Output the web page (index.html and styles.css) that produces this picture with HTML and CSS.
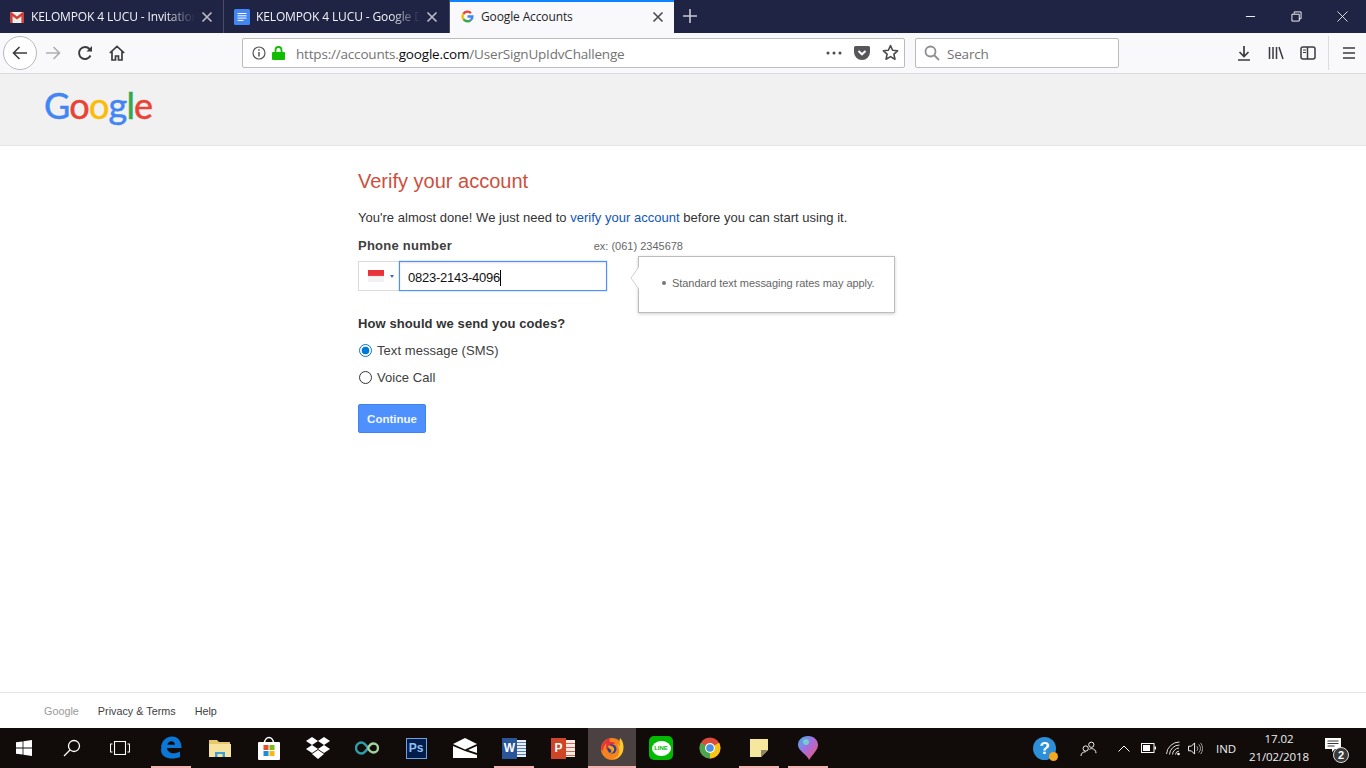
FILE: index.html
```html
<!DOCTYPE html>
<html lang="en">
<head>
<meta charset="utf-8">
<title>Google Accounts</title>
<link rel="stylesheet" href="styles.css">
</head>
<body>
<div class="tabstrip">
  <div class="tab">
    <svg class="favicon" viewBox="0 0 16 16"><rect x="1" y="3" width="14" height="11" fill="#eee"/><path d="M1 3v11h2.6V7.2L8 10.6l4.4-3.4V14H15V3h-1.4L8 7.6 2.4 3z" fill="#d0413a"/></svg>
    <span class="tab-label">KELOMPOK 4 LUCU - Invitation</span>
    <svg class="tab-close" viewBox="0 0 12 12"><path d="M1.5 1.5l9 9M10.5 1.5l-9 9" stroke="#b9bac6" stroke-width="1.7"/></svg>
  </div>
  <div class="tab tab-second">
    <svg class="favicon" viewBox="0 0 16 16"><rect width="16" height="16" rx="1.5" fill="#4285f4"/><path d="M3.5 4.5h9M3.5 6.8h9M3.5 9.1h9M3.5 11.4h6" stroke="#fff" stroke-width="1"/></svg>
    <span class="tab-label">KELOMPOK 4 LUCU - Google D</span>
    <svg class="tab-close" viewBox="0 0 12 12"><path d="M1.5 1.5l9 9M10.5 1.5l-9 9" stroke="#b9bac6" stroke-width="1.7"/></svg>
  </div>
  <div class="tab tab-active">
    <svg class="favicon favicon-g" viewBox="0 0 16 16" fill="none" stroke-width="3"><path d="M8 8h6a6 6 0 0 1-2 4.4" stroke="#4285f4"/><path d="M12 12.4A6 6 0 0 1 3 11.3" stroke="#34a853"/><path d="M3 11.3a6 6 0 0 1 0-6.6" stroke="#fbbc05"/><path d="M3 4.700A6 6 0 0 1 12.200 3.700" stroke="#ea4335"/></svg>
    <span class="tab-label">Google Accounts</span>
    <svg class="tab-close" viewBox="0 0 12 12"><path d="M1.500 1.500l9 9M10.500 1.500l-9 9" stroke="#4a4a4f" stroke-width="1.600"/></svg>
  </div>
  <svg class="new-tab" viewBox="0 0 14 14"><path d="M7 0v14M0 7h14" stroke="#c9cad4" stroke-width="1.600"/></svg>
  <div class="window-controls">
    <svg viewBox="0 0 12 12"><path d="M1 6h10" stroke="#fff"/></svg>
    <svg viewBox="0 0 12 12" fill="none"><path d="M3.500 3V1h7.500v7.500H9M1 3.500h8V11H1z" stroke="#fff"/></svg>
    <svg viewBox="0 0 12 12"><path d="M.5.500l11 11M11.500.500l-11 11" stroke="#fff" stroke-width=".9"/></svg>
  </div>
</div>

<div class="toolbar">
  <div class="back-circle">
    <svg class="icon" viewBox="0 0 16 16" fill="none" stroke="#3b3b40" stroke-width="1.600"><path d="M15 8H1.500M7.500 2L1.500 8l6 6"/></svg>
  </div>
  <svg class="icon forward" viewBox="0 0 16 16" fill="none" stroke="#aeaeb2" stroke-width="1.600"><path d="M1 8h13.500M8.500 2l6 6-6 6"/></svg>
  <svg class="icon reload" viewBox="0 0 16 16" fill="none" stroke="#3b3b40" stroke-width="1.900"><path d="M13.500 10.500A6 6 0 1 1 12.500 4L14 5.500"/><path d="M15 1v5.500H9.500z" fill="#3b3b40" stroke="none"/></svg>
  <svg class="icon home" viewBox="0 0 16 16" fill="none" stroke="#3b3b40" stroke-width="1.700"><path d="M.8 8L8 1.300 15.200 8M3 6.500V15h3.500v-4h3v4H13V6.500"/></svg>
  <div class="urlbar">
    <svg class="info" viewBox="0 0 14 14" fill="none"><circle cx="7" cy="7" r="6" stroke="#55555a" stroke-width="1.200"/><path d="M7 6v4.500M7 3.300v1.500" stroke="#55555a" stroke-width="1.500"/></svg>
    <svg class="lock" viewBox="0 0 13 14"><path d="M3.500 6.500V4a3 3 0 0 1 6 0v2.500" fill="none" stroke="#12bc00" stroke-width="1.800"/><rect y="6" width="13" height="8" rx="1" fill="#12bc00"/></svg>
    <span class="url"><span class="url-dim">https://accounts.</span>google.com<span class="url-dim">/UserSignUpIdvChallenge</span></span>
    <span class="url-actions">
      <svg class="dots" viewBox="0 0 16 4"><circle cx="2" cy="2" r="1.500" fill="#4a4a4f"/><circle cx="8" cy="2" r="1.500" fill="#4a4a4f"/><circle cx="14" cy="2" r="1.500" fill="#4a4a4f"/></svg>
      <svg class="pocket" viewBox="0 0 16 14"><path d="M1.500 0h13A1.500 1.500 0 0 1 16 1.500V6A8 8 0 0 1 0 6V1.500A1.500 1.500 0 0 1 1.500 0z" fill="#55555a"/><path d="M4.500 5L8 8.300 11.500 5" fill="none" stroke="#fff" stroke-width="2"/></svg>
      <svg class="star" viewBox="0 0 16 16"><path d="M8 1.500l2 4.400 4.700.5-3.500 3.200 1 4.700L8 11.900l-4.200 2.400 1-4.700L1.300 6.400 6 5.900z" fill="none" stroke="#4a4a4f" stroke-width="1.500" stroke-linejoin="round"/></svg>
    </span>
  </div>
  <div class="searchbar">
    <svg class="search-glass" viewBox="0 0 16 16" fill="none" stroke="#8e8e92" stroke-width="1.800"><circle cx="6.500" cy="6.500" r="5"/><path d="M10 10l5 5"/></svg>
    <span class="search-text">Search</span>
  </div>
  <div class="toolbar-right">
    <svg class="icon" viewBox="0 0 16 16" fill="none" stroke="#3b3b40" stroke-width="1.700"><path d="M8 1v10M3.500 7L8 11.500 12.500 7M2 15h12"/></svg>
    <svg class="icon" viewBox="0 0 16 16" fill="none" stroke="#3b3b40" stroke-width="1.500"><path d="M1.500 2v12M5 2v12M8.500 2v12M11 2l4 12"/></svg>
    <svg class="icon" viewBox="0 0 16 16" fill="none" stroke="#3b3b40" stroke-width="1.500"><rect x="1" y="2" width="14" height="12" rx="2"/><path d="M7.500 2v12"/><path d="M3 5h3M3 7.500h3" stroke-width="1"/></svg>
    <span class="toolbar-sep"></span>
    <svg class="icon" viewBox="0 0 16 16" fill="none" stroke="#3b3b40" stroke-width="1.700"><path d="M2 3h12M2 8h12M2 13h12"/></svg>
  </div>
</div>

<header class="page-header">
  <div class="logo"><span class="c-blue">G</span><span class="c-red">o</span><span class="c-yellow">o</span><span class="c-blue">g</span><span class="c-green">l</span><span class="c-red">e</span></div>
</header>

<main class="content">
  <h1>Verify your account</h1>
  <p class="lead">You're almost done! We just need to <a href="#">verify your account</a> before you can start using it.</p>
  <div class="label-row"><label>Phone number</label><span class="example">ex: (061) 2345678</span></div>
  <div class="phone-row">
    <div class="flag-box">
      <span class="flag"></span><span class="flag-caret"></span>
    </div>
    <div class="phone-input"><span class="phone-value">0823-2143-4096</span></div>
    <div class="tooltip">
      <svg class="tooltip-arrow" viewBox="0 0 10 26"><path d="M9.500 1L1 13l8.500 12" fill="#fff" stroke="#d0d0d0"/><path d="M10 1v24" stroke="#fff" stroke-width="2"/></svg>
      <ul><li>Standard text messaging rates may apply.</li></ul>
    </div>
  </div>
  <div class="question">How should we send you codes?</div>
  <label class="radio-row first-radio"><input type="radio" name="m" checked><span>Text message (SMS)</span></label>
  <label class="radio-row"><input type="radio" name="m"><span>Voice Call</span></label>
  <button class="continue" type="button">Continue</button>
</main>

<footer class="page-footer">
  <span class="foot-brand">Google</span>
  <a href="#">Privacy &amp; Terms</a>
  <a href="#">Help</a>
</footer>

<div class="taskbar">
  <div class="sys-btn"><svg viewBox="0 0 16 16" width="16" height="16"><path d="M0 2.300l6.600-.9v6.200H0zM7.400 1.300L16 0v7.600H7.400zM0 8.400h6.600v6.200L0 13.700zM7.400 8.400H16V16l-8.600-1.200z" fill="#fff"/></svg></div>
  <div class="sys-btn"><svg viewBox="0 0 18 18" width="18" height="18" fill="none" stroke="#fff" stroke-width="1.300"><circle cx="11" cy="7" r="5.500"/><path d="M7 11l-6 6"/></svg></div>
  <div class="sys-btn taskview"><svg viewBox="0 0 20 14" width="20" height="14" fill="none" stroke="#fff" stroke-width="1.100"><rect x="4.500" y=".5" width="11" height="13"/><path d="M2.500 3H.5v8h2M17.500 3h2v8h-2"/></svg></div>

  <div class="app open"><svg viewBox="0 0 22 24" width="22" height="24"><path d="M1 11C2 4 7 .5 12 .5c6 0 9.500 4.500 9.500 11.500H7c.3 5 7 7 13 3.500v5.500C13 24 1 23 1 14c0-3 1.500-5.500 4-7.500C4 8 3.500 9.500 3 11zM7.300 8.800H15C15 4 8 4 7.300 8.800z" fill="#0b78d7"/></svg></div>
  <div class="app"><svg viewBox="0 0 22 18" width="22" height="18"><path d="M0 1h8l2 2h11v15H0z" fill="#e8c66a"/><path d="M0 5h22v13H0z" fill="#f7e3a0"/><path d="M6 13h10v5h-2.500v-3h-5v3H6z" fill="#3fa0d8"/></svg></div>
  <div class="app"><svg viewBox="0 0 24 24" width="24" height="24"><path d="M7.500 7a4.500 5.500 0 0 1 9 0" fill="none" stroke="#fff" stroke-width="1.500"/><rect x="1" y="6" width="22" height="18" rx="1" fill="#fff"/><rect x="6.500" y="9" width="5" height="5" fill="#e8502a"/><rect x="12.500" y="9" width="5" height="5" fill="#7db81c"/><rect x="6.500" y="15" width="5" height="5" fill="#1c8fdc"/><rect x="12.500" y="15" width="5" height="5" fill="#fbb612"/></svg></div>
  <div class="app"><svg viewBox="0 0 24 22" width="24" height="22" fill="#fff"><path d="M6 0l6 4-6 4-6-4zM18 0l6 4-6 4-6-4zM0 12l6-4 6 4-6 4zM24 12l-6-4-6 4 6 4zM6 17l6-4 6 4-6 5z"/></svg></div>
  <div class="app"><svg viewBox="0 0 24 14" width="24" height="14" fill="none" stroke-width="2.400"><path d="M13 7c-2-3-4-5.500-6.500-5.500a5.500 5.500 0 0 0 0 11C9 12.500 11 10 13 7" stroke="#2f9fa8"/><path d="M13 7c1.500-3 3-4.500 5.500-4.500a4.500 4.500 0 0 1 0 9C16 11.500 14.500 10 13 7" stroke="#a3d39c"/></svg></div>
  <div class="app"><div class="ps-tile">Ps</div></div>
  <div class="app"><svg viewBox="0 0 24 20" width="24" height="20"><path d="M0 6l12-6 12 6-12 5.500z" fill="#fff"/><path d="M0 8v12h24v-3L12 13zM24 8l-9 4 9 3z" fill="#fff"/></svg></div>
  <div class="app open"><div class="office word"><span class="office-letter">W</span><span class="office-page word-page"></span></div></div>
  <div class="app"><div class="office ppt"><span class="office-letter">P</span><span class="office-page ppt-page"></span></div></div>
  <div class="app active open"><svg viewBox="0 0 24 24" width="24" height="24"><circle cx="12" cy="13" r="11" fill="#f4831f"/><path d="M20 2c4 4 4 10 3 13-2 6-7 8-11 8 6-1 8-6 7-10-.5-3-1.500-4-2-5 1 .5 2 1 3 3 0-4-1-6.500 0-9z" fill="#ffc72c"/><path d="M1 13C2 7 6 3 10 2c-.5 1.500-.5 3 0 4 2 0 4 0 5 1-1 1-2.500 1.500-3 2 1 1.500 3 3 1.500 5-1.500 1.500-5 1.500-7-1-1-1.500 0-4 0-6C4.500 9 3 11 3 15z" fill="#e6303c"/><circle cx="12" cy="13" r="4.500" fill="#2f3e8f"/><path d="M8 10c2-1 5 0 6 2 1 3-2 6-5 5 3 0 3-3 1-4-1-.5-2-1-2-3z" fill="#f7a01d"/></svg></div>
  <div class="app"><div class="line-tile"><span class="line-bubble">LINE</span></div></div>
  <div class="app"><svg viewBox="0 0 22 22" width="22" height="22"><circle cx="11" cy="11" r="10.500" fill="#dd4b3a"/><path d="M11 11L20.100 5.800A10.500 10.500 0 0 1 11 21.500z" fill="#f5c518"/><path d="M11 11L11 21.500A10.500 10.500 0 0 1 1.900 5.800z" fill="#4aa54c"/><circle cx="11" cy="11" r="5" fill="#fff"/><circle cx="11" cy="11" r="3.800" fill="#4a8fe0"/></svg></div>
  <div class="app open"><svg viewBox="0 0 18 18" width="18" height="18"><path d="M0 0h18v11l-7 7H0z" fill="#f5e79e"/><path d="M18 11h-7v7z" fill="#8b8666"/></svg></div>
  <div class="app open"><svg viewBox="0 0 20 24" width="20" height="24"><defs><linearGradient id="mapg" x1="0" y1="0" x2="1" y2="1"><stop offset="0" stop-color="#39b6e8"/><stop offset=".45" stop-color="#a66de0"/><stop offset="1" stop-color="#f0566a"/></linearGradient></defs><path d="M10 0c6 0 10 4 10 9 0 5-6 10-9 15-1-5-11-9-11-15C0 4 4 0 10 0z" fill="url(#mapg)"/><circle cx="8" cy="6" r="3" fill="#6fe0c8" opacity=".8"/></svg></div>

  <div class="tray">
    <div class="help-badge"><span class="help-q">?</span><span class="help-dot"></span></div>
    <svg class="tray-people" viewBox="0 0 18 16" fill="none" stroke="#fff" stroke-width="1"><circle cx="6" cy="8" r="2.800"/><path d="M1 16c0-3 2-4.500 5-4.500"/><circle cx="12" cy="4" r="2.800"/><path d="M10 9c1-1 2-1 3-.8 2 .3 4 1.800 4 4.800"/></svg>
    <svg class="tray-chevron" viewBox="0 0 12 7" fill="none" stroke="#fff" stroke-width="1"><path d="M.5 6.500L6 1l5.500 5.500"/></svg>
    <svg class="tray-battery" viewBox="0 0 15 10"><rect x=".5" y=".5" width="12.500" height="9" fill="none" stroke="#fff"/><rect x="2" y="2" width="7" height="6" fill="#fff"/><rect x="13.500" y="3.500" width="1.500" height="3" fill="#fff"/></svg>
    <svg class="tray-wifi" viewBox="0 0 15 15" fill="none" stroke="#ddd" stroke-width="1"><path d="M.5 13A13 13 0 0 1 13.500 1M3.500 13.500A10 10 0 0 1 13.500 4M6.500 13.500A7 7 0 0 1 13 7M9.500 13.500A4 4 0 0 1 13 10"/><circle cx="12.500" cy="13" r="1.300" fill="#fff" stroke="none"/></svg>
    <svg class="tray-volume" viewBox="0 0 16 14" fill="none" stroke="#fff" stroke-width="1"><path d="M.5 4.500h3L7 1v12L3.500 9.500h-3z"/><path d="M9.500 4.500a4 4 0 0 1 0 5M11.500 2.500a7 7 0 0 1 0 9M13.500 1a9.500 9.500 0 0 1 0 12" stroke="#aaa"/></svg>
    <span class="tray-lang">IND</span>
    <div class="clock"><span>17.02</span><span>21/02/2018</span></div>
    <div class="notif">
      <svg viewBox="0 0 16 14" width="16" height="14"><path d="M0 0h16v11h-6l-3 3v-3H0z" fill="#fff"/><path d="M2.500 3h11M2.500 5.500h11M2.500 8h7" stroke="#222" stroke-width=".9"/></svg>
      <span class="notif-count">2</span>
    </div>
  </div>
</div>
</body>
</html>
```
FILE: styles.css
```css
* { box-sizing: border-box; }
html, body { margin: 0; padding: 0; }
body {
  width: 1366px;
  height: 768px;
  overflow: hidden;
  display: flex;
  flex-direction: column;
  background: #fff;
  font-family: "Liberation Sans", Arial, sans-serif;
  font-size: 13px;
  color: #222;
}

/* Tab strip */
.tabstrip {
  height: 33px;
  flex: none;
  display: flex;
  align-items: stretch;
  background: #1f2344;
  font-family: "Open Sans", sans-serif;
  font-size: 12px;
  letter-spacing: -.13px;
  color: #f3f3f6;
}
.tab {
  width: 224px;
  display: flex;
  align-items: center;
  padding-left: 9px;
  padding-right: 10px;
  border-right: 1px solid #4a4d68;
}
.tab-second { width: 226px; padding-left: 10px; padding-right: 11px; }
.tab-active {
  width: 224px;
  border-right: 0;
  background: #f9f9fb;
  color: #1f1f24;
  border-top: 2px solid #0a84ff;
  padding-left: 11px;
  padding-bottom: 2px;
}
.favicon { width: 16px; height: 16px; flex: none; }
.favicon-g { width: 13px; height: 13px; margin-right: 7px; }
.tab-label {
  flex: 1;
  min-width: 0;
  margin-left: 6px;
  white-space: nowrap;
  -webkit-mask-image: linear-gradient(to right, #000 82%, transparent 100%);
  mask-image: linear-gradient(to right, #000 82%, transparent 100%);
}
.tab-active .tab-label { margin-left: 0; -webkit-mask-image: none; mask-image: none; }
.tab-close { width: 12px; height: 12px; flex: none; margin-left: 6px; }
.new-tab { width: 14px; height: 14px; margin: 9px 0 0 9px; }
.window-controls {
  margin-left: auto;
  display: flex;
  align-items: center;
  gap: 35px;
  padding-right: 18px;
}
.window-controls svg { width: 11px; height: 11px; display: block; }

/* Toolbar */
.toolbar {
  height: 41px;
  flex: none;
  display: flex;
  align-items: center;
  background: #f9f9fb;
  border-bottom: 1px solid #dcdcde;
  padding-bottom: 1px;
  font-family: "Open Sans", sans-serif;
}
.icon { width: 16px; height: 16px; flex: none; display: block; }
.back-circle {
  width: 34px;
  height: 34px;
  margin-left: 3px;
  border: 1px solid #b9b9bd;
  border-radius: 50%;
  background: #fff;
  display: flex;
  align-items: center;
  justify-content: center;
}
.forward { margin-left: 8px; }
.reload { margin-left: 16px; }
.home { margin-left: 16px; }
.urlbar {
  width: 663px;
  height: 30px;
  margin-left: 117px;
  background: #fff;
  border: 1px solid #bcbcbc;
  border-radius: 2px;
  display: flex;
  align-items: center;
  padding-left: 9px;
  padding-right: 5px;
  font-size: 13.5px;
  letter-spacing: -.19px;
  color: #0c0c0d;
}
.info { width: 14px; height: 14px; flex: none; }
.lock { width: 13px; height: 14px; flex: none; margin-left: 6px; }
.url { margin: 2px 0 0 11px; white-space: nowrap; }
.url-dim { color: #737373; }
.url-actions { margin-left: auto; display: flex; align-items: center; }
.dots { width: 16px; height: 4px; }
.pocket { width: 16px; height: 14px; margin-left: 12px; }
.star { width: 17px; height: 17px; margin-left: 12px; }
.searchbar {
  width: 204px;
  height: 30px;
  margin-left: 10px;
  background: #fff;
  border: 1px solid #bcbcbc;
  border-radius: 2px;
  display: flex;
  align-items: center;
  padding-left: 8px;
  font-size: 13.5px;
  letter-spacing: -.19px;
  color: #737373;
}
.search-glass { width: 16px; height: 16px; margin-right: 7px; }
.search-text { margin-top: 2px; }
.toolbar-right {
  display: flex;
  align-items: center;
  margin-left: 117px;
  gap: 16px;
}
.toolbar-sep { width: 1px; height: 34px; background: #dcdcde; margin: 0 -4px 0 -4px; }

/* Page header */
.page-header {
  height: 72px;
  flex: none;
  background: #f1f1f1;
  border-bottom: 1px solid #e5e5e5;
  padding: 8px 0 0 44px;
}
.logo {
  font-family: Lato, sans-serif;
  font-size: 36px;
  line-height: 46px;
  letter-spacing: -.8px;
  -webkit-text-stroke: .5px;
}
.c-blue { color: #4285f4; }
.c-red { color: #ea4335; }
.c-yellow { color: #fbbc05; }
.c-green { color: #34a853; }

/* Main */
.content { flex: 1; padding-left: 358px; position: relative; }
h1 {
  margin: 22px 0 0;
  font-size: 20px;
  line-height: 26px;
  font-weight: normal;
  color: #cd4f40;
}
.lead { margin: 15px 0 0; line-height: 18px; letter-spacing: .023px; color: #333; }
.lead a { color: #1155b8; text-decoration: none; }
.label-row {
  width: 325px;
  margin-top: 9px;
  height: 18px;
  display: flex;
  justify-content: space-between;
  align-items: center;
}
.label-row label { font-weight: bold; letter-spacing: .25px; color: #404040; }
.example { font-size: 11px; color: #666; padding-top: 2px; }
.phone-row { position: relative; display: flex; height: 30px; margin-top: 7px; }
.flag-box {
  width: 42px;
  border: 1px solid #dcdcdc;
  border-right: 0;
  display: flex;
  align-items: center;
  padding-left: 9px;
  background: #fff;
}
.flag {
  width: 16px;
  height: 12px;
  background: linear-gradient(to bottom, #e8323c 0, #e8323c 45%, #f5f5f5 55%, #f0f0f0 100%);
}
.flag-caret {
  margin-left: 6px;
  width: 0;
  height: 0;
  border-left: 2.500px solid transparent;
  border-right: 2.500px solid transparent;
  border-top: 3px solid #3b6fb5;
}
.phone-input {
  width: 208px;
  margin-left: -1px;
  border: 1px solid #4d90fe;
  box-shadow: inset 0 1px 2px rgba(0, 0, 0, .12), 0 0 1px #4d90fe;
  display: flex;
  align-items: center;
  padding: 3px 0 0 8px;
  letter-spacing: -.25px;
  color: #111;
}
.phone-value { border-right: 1px solid #000; line-height: 16px; }
.tooltip {
  position: absolute;
  left: 280px;
  top: -5px;
  width: 257px;
  height: 57px;
  background: #fff;
  border: 1px solid #bdbdbd;
  box-shadow: 0 1px 3px rgba(0, 0, 0, .2);
  display: flex;
  align-items: center;
  padding-bottom: 3px;
  color: #666;
  font-size: 11px;
  letter-spacing: -.05px;
}
.tooltip-arrow { position: absolute; left: -9px; top: 8px; width: 10px; height: 26px; }
.tooltip ul { margin: 0; padding: 0 0 0 23px; list-style: none; }
.tooltip li::before {
  content: "";
  display: inline-block;
  width: 4px;
  height: 4px;
  margin-right: 6px;
  border-radius: 50%;
  background: #777;
  vertical-align: 2px;
}

.question { margin-top: 24px; line-height: 18px; font-weight: bold; letter-spacing: .1px; color: #333; }
.radio-row { display: flex; align-items: center; height: 27px; color: #404040; letter-spacing: .06px; }
.first-radio { margin-top: 4px; }
.radio-row input {
  appearance: none;
  -webkit-appearance: none;
  width: 13px;
  height: 13px;
  margin: 0 5px 0 1px;
  border: 1px solid #333;
  border-radius: 50%;
  background: #fff;
}
.radio-row input:checked {
  border-color: #0078d7;
  background: radial-gradient(circle, #0078d7 0, #0078d7 3.500px, #fff 4.200px);
}
.continue {
  display: block;
  margin-top: 13px;
  width: 68px;
  height: 29px;
  padding: 0;
  background: #4d90fe;
  border: 1px solid #3f83ef;
  border-radius: 2px;
  color: #f3f7ff;
  font-family: inherit;
  font-size: 11.500px;
  font-weight: bold;
}

/* Footer */
.page-footer {
  height: 36px;
  flex: none;
  border-top: 1px solid #e5e5e5;
  display: flex;
  align-items: center;
  padding-left: 44px;
  font-size: 10.800px;
}
.page-footer a { color: #404040; text-decoration: none; }
.foot-brand { color: #999; margin-right: 19px; }
.page-footer a + a { margin-left: 19px; }

/* Taskbar */
.taskbar {
  height: 40px;
  flex: none;
  display: flex;
  align-items: stretch;
  gap: 1px;
  background: #110c0a;
  color: #fff;
}
.sys-btn { width: 47px; display: flex; align-items: center; justify-content: center; }
.taskview { margin-right: 3px; }
.app {
  width: 48px;
  flex: none;
  display: flex;
  align-items: center;
  justify-content: center;
  position: relative;
}
.app.active { background: #4b4140; }
.app.open::after {
  content: "";
  position: absolute;
  left: 4px;
  right: 4px;
  bottom: 0;
  height: 2px;
  background: #f4b1b1;
}
.app.active::after { left: 0; right: 0; }
.ps-tile {
  width: 21px;
  height: 21px;
  background: #001d4d;
  border: 1px solid #6fa3de;
  color: #8fc0f0;
  font: bold 12px/19px "Liberation Sans", sans-serif;
  text-align: center;
}
.office { width: 24px; height: 22px; position: relative; display: flex; align-items: center; }
.office-letter {
  width: 15px;
  height: 21px;
  font: bold 12px/21px "Liberation Sans", sans-serif;
  text-align: center;
  color: #fff;
  position: relative;
  z-index: 1;
}
.word .office-letter { background: #2a5699; }
.ppt .office-letter { background: #d04525; }
.office-page { width: 9px; height: 17px; }
.word-page { background: repeating-linear-gradient(to bottom, #e8eef8 0, #e8eef8 2px, #5a7fb8 2px, #5a7fb8 3px); }
.ppt-page { background: repeating-linear-gradient(to bottom, #f8e8e4 0, #f8e8e4 3px, #d06a50 3px, #d06a50 4px); }
.line-tile {
  width: 24px;
  height: 24px;
  border-radius: 5px;
  background: #00b900;
  display: flex;
  align-items: center;
  justify-content: center;
}
.line-bubble {
  width: 19px;
  height: 15px;
  border-radius: 50%;
  background: #fff;
  color: #00b900;
  font: bold 6px/15px "Liberation Sans", sans-serif;
  text-align: center;
}
.tray {
  margin-left: auto;
  display: flex;
  align-items: center;
  font-family: "Open Sans", sans-serif;
  font-size: 11.500px;
  letter-spacing: -.1px;
  color: #eee;
}
.help-badge {
  width: 23px;
  height: 23px;
  border-radius: 50%;
  background: #2d8fd8;
  position: relative;
  font: bold 17px/23px "Liberation Sans", sans-serif;
  color: #fff;
  text-align: center;
}
.help-q { display: block; }
.help-dot {
  position: absolute;
  right: -2px;
  bottom: -1px;
  width: 9px;
  height: 9px;
  border-radius: 50%;
  background: #f5a623;
}
.tray-people { width: 17px; height: 15px; margin-left: 24px; }
.tray-chevron { width: 12px; height: 7px; margin-left: 21px; }
.tray-battery { width: 15px; height: 10px; margin-left: 11px; }
.tray-wifi { width: 15px; height: 15px; margin-left: 10px; }
.tray-volume { width: 15px; height: 13px; margin-left: 7px; }
.tray-lang { margin-left: 13px; }
.clock {
  width: 60px;
  margin-left: 13px;
  display: flex;
  flex-direction: column;
  align-items: center;
  line-height: 18px;
}
.notif { width: 48px; margin-left: 9px; position: relative; height: 24px; padding: 2px 0 0 7px; }
.notif-count {
  position: absolute;
  left: 15px;
  top: 11px;
  width: 16px;
  height: 16px;
  border-radius: 50%;
  background: #3a3a3a;
  border: 1px solid #ddd;
  font: bold 11px/14px "Liberation Sans", sans-serif;
  text-align: center;
  color: #fff;
}
```
